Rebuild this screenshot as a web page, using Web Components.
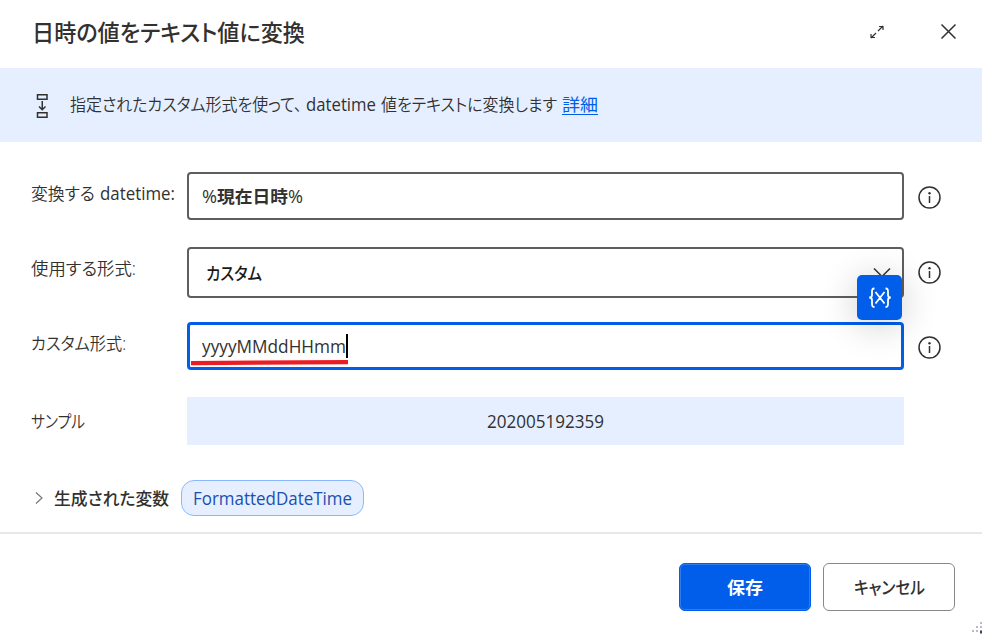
<!DOCTYPE html>
<html lang="ja">
<head>
<meta charset="utf-8">
<title>日時の値をテキスト値に変換</title>
<style>
    html, body {
        margin: 0;
        height: 100%;
        overflow: hidden;
        background: #fff;
    }

    body {
        font-family: "Open Sans", "Noto Sans CJK JP", sans-serif;
        font-size: 17.5px;
        color: #323130;
    }
</style>
</head>
<body>
<action-dialog></action-dialog>

<script>
// Single line of text, condensed or stretched to the given width
class FitText extends HTMLElement {
    connectedCallback() {
        this.attachShadow({mode: 'open'}).innerHTML = `
        <style>
            :host {
                display: block;
                flex: none;
                line-height: 24px;
                height: 24px;
                white-space: nowrap;
                font-feature-settings: "palt";
            }

            span {
                display: inline-block;
                transform-origin: 0 50%;
            }
        </style>
        <span><slot></slot></span>
        `;
        const span = this.shadowRoot.querySelector('span');
        const width = Number(this.getAttribute('width'));
        span.style.transform = `scaleX(${width / span.getBoundingClientRect().width})`;
        this.style.width = `${width}px`;
    }
}

class DialogHeader extends HTMLElement {
    constructor() {
        super();
        this.attachShadow({mode: 'open'}).innerHTML = `
        <style>
            :host {
                display: flex;
                align-items: center;
                height: 68px;
                box-sizing: border-box;
                padding: 0 24px 4px 32px;
            }

            .title {
                flex: 1;
                font-size: 23px;
                font-weight: 500;
            }

            svg {
                display: block;
                fill: none;
                stroke: #323130;
            }

            .expand {
                margin-right: 54px;
            }
        </style>
        <div class="title"><slot></slot></div>
        <svg class="expand" width="16" height="16" viewBox="0 0 16 16" stroke-width="1.2">
            <path d="M9 7L14 2M10 2.500H14V6M7 9L2 14M2 10V13.500H6"/>
        </svg>
        <svg width="19" height="18" viewBox="0 0 19 18" stroke-width="1.5">
            <path d="M2.500 1.500L16.500 15.500M16.500 1.500L2.500 15.500"/>
        </svg>
        `;
    }
}

class InfoBanner extends HTMLElement {
    constructor() {
        super();
        this.attachShadow({mode: 'open'}).innerHTML = `
        <style>
            :host {
                display: flex;
                align-items: center;
                height: 74px;
                box-sizing: border-box;
                padding-left: 36px;
                background: #e5efff;
            }

            svg {
                margin: 2px 22px 0 0;
                fill: none;
                stroke: #323130;
                stroke-width: 1.5;
            }

            div {
                display: flex;
                padding-bottom: 2px;
            }
        </style>
        <svg width="12" height="26" viewBox="0 0 12 26">
            <path d="M1.500 1.700H11V6.300H1.500ZM1.500 19.700H11V24.300H1.500ZM6.250 8V16.500M3 13.500L6.250 16.700L9.500 13.500"/>
        </svg>
        <div><slot></slot></div>
        `;
    }
}

class FormRow extends HTMLElement {
    constructor() {
        super();
        this.attachShadow({mode: 'open'}).innerHTML = `
        <style>
            :host {
                display: grid;
                grid-template-columns: 156px 717px 38px;
            }

            .label {
                display: flex;
                padding-top: 9px;
            }

            svg {
                display: block;
                margin: 14px 0 0 14px;
                fill: none;
                stroke: #323130;
                stroke-width: 1.500;
            }

            :host([plain]) svg {
                display: none;
            }

            :host([plain]) .label {
                padding-top: 12px;
            }
        </style>
        <div class="label"><slot name="label"></slot></div>
        <slot></slot>
        <svg width="24" height="24" viewBox="0 0 24 24">
            <circle cx="11.500" cy="11.500" r="10.500"/>
            <path d="M11.500 10V17"/>
            <circle cx="11.500" cy="7.300" r="1.200" fill="#323130" stroke="none"/>
        </svg>
        `;
    }
}

class FieldBox extends HTMLElement {
    constructor() {
        super();
        this.attachShadow({mode: 'open'}).innerHTML = `
        <style>
            :host {
                position: relative;
                display: flex;
                align-items: center;
                box-sizing: border-box;
                height: 48px;
                padding-left: 13px;
                border: 2px solid #605e5c;
                border-radius: 4px;
                background: #fff;
            }

            :host([select]) {
                height: 51px;
                padding-left: 17px;
                color: #1b1a19;
            }

            :host([focused]) {
                border: 3px solid #005eea;
                padding-left: 12px;
            }

            .chevron, .caret, .mark {
                display: none;
            }

            :host([select]) .chevron {
                display: block;
                margin: 0 11px 0 auto;
                fill: none;
                stroke: #323130;
                stroke-width: 1.500;
            }

            :host([focused]) .caret {
                display: block;
                width: 2px;
                height: 24px;
                background: #000;
            }

            :host([focused]) .mark {
                display: block;
                position: absolute;
                left: 1px;
                top: 34px;
                fill: #ec1c24;
            }
        </style>
        <slot></slot>
        <i class="caret"></i>
        <svg class="chevron" width="18" height="11" viewBox="0 0 18 11"><path d="M1 1.500L9 9.500L17 1.500"/></svg>
        <svg class="mark" width="157" height="7" viewBox="0 0 157 7"><path d="M0 2L157 1V5.200L0 6.200Z"/></svg>
        `;
    }
}

class VariableButton extends HTMLElement {
    constructor() {
        super();
        this.attachShadow({mode: 'open'}).innerHTML = `
        <style>
            :host {
                position: absolute;
                right: 0;
                top: 26px;
                z-index: 1;
                display: flex;
                align-items: center;
                justify-content: center;
                width: 45px;
                height: 45px;
                border-radius: 5px;
                background: #005eea;
                box-shadow: 0 5px 36px rgba(0, 0, 0, .2);
            }

            svg {
                fill: none;
                stroke: #fff;
                stroke-width: 1.800;
            }
        </style>
        <svg width="24" height="22" viewBox="0 0 24 22">
            <path d="M6.500 1.500C4 1.500 4 2.500 4 5V8C4 10 3 10.500 1.200 10.500C3 10.500 4 11 4 13V16C4 18.500 4 20 6.500 20M17.500 1.500C20 1.500 20 2.500 20 5V8C20 10 21 10.500 22.800 10.500C21 10.500 20 11 20 13V16C20 18.500 20 20 17.500 20M7.500 5L16.500 16.500M16.500 5L7.500 16.500"/>
        </svg>
        `;
    }
}

class SampleBox extends HTMLElement {
    constructor() {
        super();
        this.attachShadow({mode: 'open'}).innerHTML = `
        <style>
            :host {
                display: flex;
                align-items: center;
                justify-content: center;
                height: 48px;
                background: #e5efff;
            }
        </style>
        <slot></slot>
        `;
    }
}

class VariableList extends HTMLElement {
    constructor() {
        super();
        this.attachShadow({mode: 'open'}).innerHTML = `
        <style>
            :host {
                display: flex;
                align-items: center;
                height: 36px;
                font-weight: 500;
            }

            svg {
                margin: 0 10px 0 4px;
                fill: none;
                stroke: #797775;
                stroke-width: 1.200;
            }

            .chip {
                display: flex;
                align-items: center;
                box-sizing: border-box;
                height: 36px;
                margin-left: 12px;
                padding: 0 11px;
                border: 1px solid #8ab8ff;
                border-radius: 13px;
                background: #e5efff;
                color: #1a4fae;
                font-weight: 400;
            }
        </style>
        <svg width="9" height="14" viewBox="0 0 9 14"><path d="M1 1.500L7 7L1 12.500"/></svg>
        <slot></slot>
        <div class="chip"><slot name="variable"></slot></div>
        `;
    }
}

class DialogButton extends HTMLElement {
    constructor() {
        super();
        this.attachShadow({mode: 'open'}).innerHTML = `
        <style>
            :host {
                display: flex;
                align-items: center;
                justify-content: center;
                box-sizing: border-box;
                width: 132px;
                height: 48px;
                border: 1px solid #8a8886;
                border-radius: 6px;
                background: #fff;
                font-weight: 500;
            }

            :host([primary]) {
                border-color: #005eea;
                background: #005eea;
                box-shadow: inset 0 0 0 1px #2f7cef;
                color: #fff;
                font-weight: 700;
            }
        </style>
        <slot></slot>
        `;
    }
}

class ActionDialog extends HTMLElement {
    constructor() {
        super();
        this.attachShadow({mode: 'open'}).innerHTML = `
        <style>
            :host {
                display: flex;
                flex-direction: column;
                position: relative;
                height: 634px;
                width: 982px;
                overflow: hidden;
            }

            main {
                height: 392px;
                box-sizing: border-box;
                padding: 30px 0 0 31px;
                border-bottom: 2px solid #e8e8e8;
            }

            form-row {
                height: 75px;
            }

            a {
                display: flex;
                margin-left: 5px;
                color: #005eea;
                text-decoration: none;
                height: 22px;
                border-bottom: 1px solid #005eea;
            }

            variable-list {
                margin-top: 8px;
            }

            footer {
                display: flex;
                justify-content: flex-end;
                gap: 12px;
                padding: 29px 27px 0 0;
            }

            .bold {
                font-weight: 700;
            }

            .medium {
                font-weight: 500;
            }

            .label {
                display: flex;
                gap: 5px;
                font-weight: 350;
            }

            .light {
                font-weight: 350;
            }

            .latin {
                font-weight: 370;
            }

            .grip {
                position: absolute;
                right: 0;
                bottom: 0;
                fill: #b6bccb;
            }
        </style>
        <dialog-header><fit-text width="273">日時の値をテキスト値に変換</fit-text></dialog-header>
        <info-banner>
            <fit-text class="light" width="232">指定されたカスタム形式を使って、</fit-text>
            <fit-text class="latin" width="70" style="margin-left:4px">datetime</fit-text>
            <fit-text class="light" width="176" style="margin-left:5px">値をテキストに変換します</fit-text>
            <a><fit-text width="36">詳細</fit-text></a>
        </info-banner>
        <main>
            <form-row>
                <div slot="label" class="label"><fit-text width="64">変換する</fit-text><fit-text class="latin" width="75">datetime:</fit-text></div>
                <field-box><fit-text width="15">%</fit-text><fit-text class="bold" width="71">現在日時</fit-text><fit-text width="15">%</fit-text></field-box>
            </form-row>
            <form-row>
                <div slot="label" class="label"><fit-text width="105">使用する形式:</fit-text></div>
                <field-box select><fit-text class="medium" width="56">カスタム</fit-text><variable-button></variable-button></field-box>
            </form-row>
            <form-row>
                <div slot="label" class="label"><fit-text width="95">カスタム形式:</fit-text></div>
                <field-box focused><fit-text class="latin" width="144">yyyyMMddHHmm</fit-text></field-box>
            </form-row>
            <form-row plain>
                <div slot="label" class="label"><fit-text width="54">サンプル</fit-text></div>
                <sample-box><fit-text class="latin" width="117">202005192359</fit-text></sample-box>
            </form-row>
            <variable-list>
                <fit-text width="115">生成された変数</fit-text>
                <fit-text slot="variable" width="159">FormattedDateTime</fit-text>
            </variable-list>
        </main>
        <footer>
            <dialog-button primary><fit-text width="36">保存</fit-text></dialog-button>
            <dialog-button><fit-text width="71">キャンセル</fit-text></dialog-button>
        </footer>
        <svg class="grip" width="11" height="12" viewBox="0 0 11 12">
            <path d="M9 0h2v2h-2zM5 4h2v2h-2zM9 4h2v2h-2zM1 8h2v2h-2zM5 8h2v2h-2z"/>
            <path d="M9 8.500h2v3h-2z" fill="#444"/>
        </svg>
        `;
    }
}

customElements.define('action-dialog', ActionDialog);
customElements.define('dialog-header', DialogHeader);
customElements.define('info-banner', InfoBanner);
customElements.define('form-row', FormRow);
customElements.define('field-box', FieldBox);
customElements.define('variable-button', VariableButton);
customElements.define('sample-box', SampleBox);
customElements.define('variable-list', VariableList);
customElements.define('dialog-button', DialogButton);
// Last, so that the fonts of its parents already apply when it measures itself
customElements.define('fit-text', FitText);
</script>
</body>
</html>
